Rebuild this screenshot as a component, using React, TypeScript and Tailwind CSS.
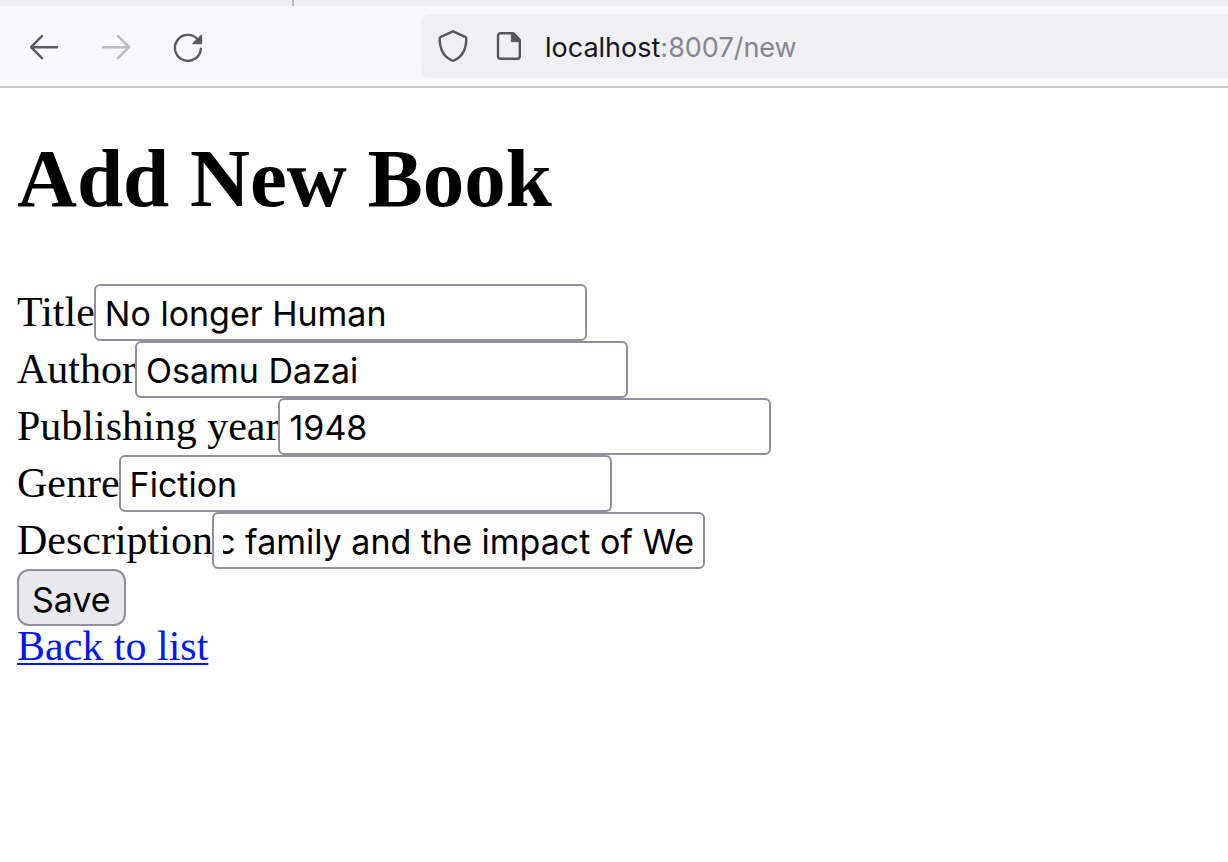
import { useEffect, useRef } from "react";

const fields = [
  { id: "title", label: "Title", value: "No longer Human" },
  { id: "author", label: "Author", value: "Osamu Dazai" },
  { id: "year", label: "Publishing year", value: "1948" },
  { id: "genre", label: "Genre", value: "Fiction" },
  {
    id: "description",
    label: "Description",
    value: "The decline of an aristocratic family and the impact of We",
  },
];

function Field({ id, label, value }: { id: string; label: string; value: string }) {
  const ref = useRef<HTMLInputElement>(null);

  // Keep the end of a long value in view.
  useEffect(() => {
    const input = ref.current;
    if (input) input.scrollLeft = input.scrollWidth;
  }, []);

  return (
    <div className="flex items-center">
      <label htmlFor={id} className="shrink-0 pb-0.5">
        {label}
      </label>
      <input
        ref={ref}
        id={id}
        type="text"
        defaultValue={value}
        className="-ml-px h-[57px] w-[493px] min-w-0 rounded-md border-2 border-[#8f8f9d] bg-white px-[9px] pt-px font-['Inter',sans-serif] text-[34px] text-black"
      />
    </div>
  );
}

function BrowserBar() {
  return (
    <header>
      <div className="flex h-1.5 bg-[#f0f0f4]">
        <div className="w-[294px] border-r-2 border-[#b8b8bc]" />
      </div>
      <div className="flex h-[82px] items-center border-b-2 border-[#cccccc] bg-[#f9f9fb] pl-7 text-[#5b5b66]">
        <nav className="flex shrink-0 gap-10 pt-0.5">
          <button type="button" aria-label="Back">
            <svg className="size-8" viewBox="0 0 32 32" fill="none" stroke="currentColor" strokeWidth="2.4" strokeLinecap="round" strokeLinejoin="round">
              <path d="M29 16.2H3M14 5.2 3 16.2l11 11" />
            </svg>
          </button>
          <button type="button" aria-label="Forward" disabled className="text-[#bcbcc1]">
            <svg className="size-8" viewBox="0 0 32 32" fill="none" stroke="currentColor" strokeWidth="2.4" strokeLinecap="round" strokeLinejoin="round">
              <path d="M3 16.2h26M18 5.2l11 11-11 11" />
            </svg>
          </button>
          <button type="button" aria-label="Reload">
            <svg className="size-8" viewBox="0 0 32 32" fill="none" stroke="currentColor" strokeWidth="2.4" strokeLinecap="round">
              <path d="M28.9 17.6A13 13 0 1 1 25.6 8.2" />
              <path d="M29.5 4.2v8.4h-8.4z" fill="currentColor" strokeWidth="1.4" strokeLinejoin="round" />
            </svg>
          </button>
        </nav>
        <div className="ml-[217px] flex h-16 flex-1 items-center rounded-l-lg bg-[#f0f0f4] pl-4 text-[#55555c]">
          <svg className="size-8 shrink-0" viewBox="0 0 32 32" fill="none" stroke="currentColor" strokeWidth="2.4" strokeLinejoin="round">
            <path d="M16 1.3 28.2 6.8Q29.3 7.3 29.3 8.6C29.3 18.5 25.5 26.7 17.2 30.5Q16 31 14.8 30.5C6.5 26.7 2.7 18.5 2.7 8.6Q2.7 7.3 3.8 6.8Z" />
          </svg>
          <svg className="ml-6 size-8 shrink-0" viewBox="0 0 32 32" fill="none" stroke="currentColor" strokeWidth="2.4" strokeLinejoin="round">
            <path d="M7.5 3.2h12.7l6.6 6.6v16.5a2.5 2.5 0 0 1-2.5 2.5H7.5A2.5 2.5 0 0 1 5 26.300V5.700a2.5 2.5 0 0 1 2.5-2.500z" />
            <path d="M18.300 3h2.100l6.600 6.600v2.100h-8.700z" fill="currentColor" strokeWidth="0.8" />
          </svg>
          <div role="textbox" aria-label="Address" className="ml-5 pt-1 font-['Inter',sans-serif] text-[27px] text-[#15141a]">
            localhost<span className="text-[#86868c]">:8007/new</span>
          </div>
        </div>
      </div>
    </header>
  );
}

export default function App() {
  return (
    <div className="min-h-screen bg-white text-black">
      <BrowserBar />
      <main className="px-[17px] pt-[42px] font-['Liberation_Serif',serif] text-[42px] leading-[40px]">
        <h1 className="text-[83px] leading-[96px] font-bold">Add New Book</h1>
        <form className="mt-[58px]" onSubmit={(event) => event.preventDefault()}>
          {fields.map((field) => (
            <Field key={field.id} {...field} />
          ))}
          <button
            type="submit"
            className="block h-[57px] rounded-xl border-2 border-[#8f8f9d] bg-[#e9e9ed] px-[13px] pt-0.5 font-['Inter',sans-serif] text-[34px] leading-[53px]"
          >
            Save
          </button>
        </form>
        <a href="#list" className="text-[#0017ee] underline decoration-2 underline-offset-3">
          Back to list
        </a>
      </main>
    </div>
  );
}
